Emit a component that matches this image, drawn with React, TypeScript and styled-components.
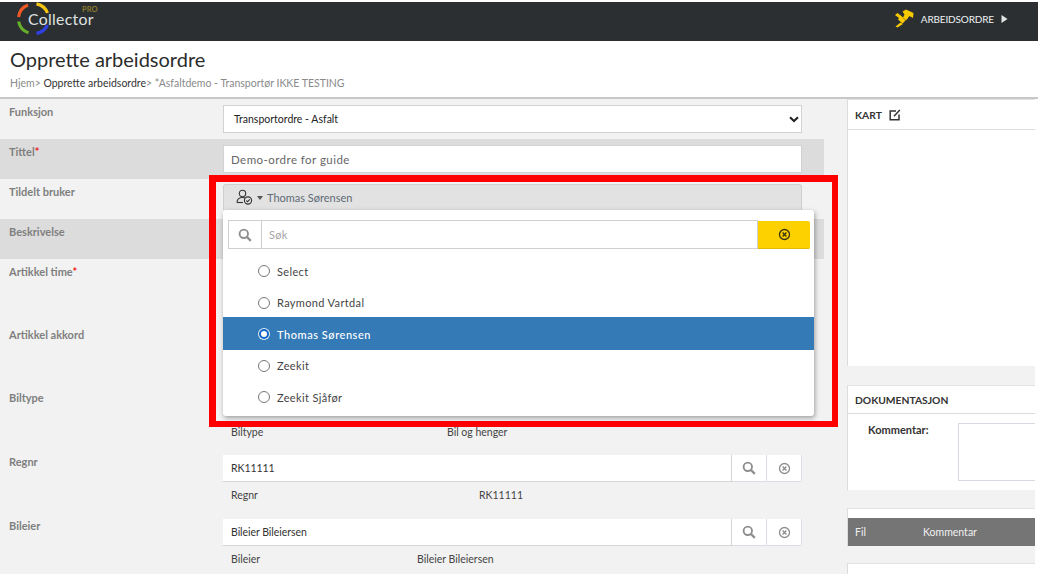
import React from 'react';
import styled, { createGlobalStyle } from 'styled-components';

const GlobalStyle = createGlobalStyle`
  html, body {
    margin: 0;
    padding: 0;
    background: #fff;
  }
  body {
    width: 1038px;
    height: 574px;
    overflow: hidden;
    font-family: Lato, "Open Sans", "Liberation Sans", sans-serif;
    font-size: 11px;
    color: #333;
  }
`;

const Page = styled.div`
  position: relative;
  width: 1038px;
  height: 574px;
  padding-top: 2px;
  box-sizing: border-box;
  overflow: hidden;
`;

const TopBar = styled.header`
  display: flex;
  align-items: flex-start;
  justify-content: space-between;
  height: 39px;
  padding: 0 30px 0 17px;
  background: #2b2f31;
`;

const Logo = styled.div`
  position: relative;
  display: flex;
  width: 80px;
  height: 33px;
`;

const LogoName = styled.span`
  position: absolute;
  left: 11px;
  top: 10px;
  font-size: 15.8px;
  line-height: 13px;
  letter-spacing: 0.3px;
  color: #dfe2e2;
`;

const LogoPro = styled.span`
  position: absolute;
  left: 65px;
  top: 5px;
  font-size: 7.5px;
  line-height: 5px;
  font-weight: 700;
  color: #8a7a2c;
`;

const NavLink = styled.div`
  display: flex;
  align-items: center;
  gap: 7px;
  height: 33px;
  font-size: 10px;
  letter-spacing: -0.15px;
  color: #eef2f5;
`;

const TitleArea = styled.div`
  height: 58px;
  padding: 6px 10px 0;
  box-sizing: border-box;
  border-bottom: 2px solid #c8c8c8;
`;

const PageTitle = styled.h1`
  margin: 0;
  font-size: 20px;
  line-height: 24px;
  font-weight: 400;
  color: #2c2c2c;
`;

const Crumbs = styled.div`
  margin-top: 5px;
  font-size: 10.5px;
  line-height: 14px;
  color: #8a8a8a;
`;

const CrumbActive = styled.span`
  color: #333;
`;

const Content = styled.div`
  display: flex;
  width: 1035px;
  height: 475px;
  background: #f2f2f2;
`;

const FormColumn = styled.main`
  width: 824px;
  margin-right: 23px;
  flex: none;
`;

const Row = styled.div<{ $height: number; $shaded?: boolean }>`
  display: grid;
  grid-template-columns: 223px 579px;
  height: ${(p) => p.$height}px;
  padding-top: 6px;
  box-sizing: border-box;
  background: ${(p) => (p.$shaded ? '#dcdcdc' : 'transparent')};
`;

const Label = styled.label`
  padding-left: 9px;
  font-size: 11px;
  line-height: 14px;
  font-weight: 700;
  color: #7f7f7f;
`;

const Required = styled.span`
  color: #f01818;
`;

const Field = styled.div`
  position: relative;
  min-width: 0;
`;

const TextBox = styled.div<{ $muted?: boolean }>`
  display: flex;
  align-items: center;
  justify-content: space-between;
  height: 28px;
  padding: 0 7px 0 7px;
  box-sizing: border-box;
  background: #fff;
  border: 1px solid #d2d2d2;
  font-size: ${(p) => (p.$muted ? '11.5px' : '10.5px')};
  letter-spacing: ${(p) => (p.$muted ? '0.45px' : '0')};
  color: ${(p) => (p.$muted ? '#666' : '#333')};
`;

const SelectBox = styled(TextBox)`
  padding-left: 10px;
  padding-right: 2px;
  color: #222;
`;

const LookupGroup = styled.div`
  display: flex;
  height: 27px;
`;

const LookupInput = styled.div`
  flex: 1;
  display: flex;
  align-items: center;
  padding-left: 8px;
  background: #fff;
  border-bottom: 1px solid #d4d4d4;
  border-right: 1px solid #d4d4d4;
  font-size: 10.5px;
  letter-spacing: -0.05px;
  color: #333;
`;

const LookupButton = styled.div`
  display: flex;
  align-items: center;
  justify-content: center;
  width: 34px;
  background: #fff;
  border-right: 1px solid #dcdce4;
  border-bottom: 1px solid #dcdce4;
  border-radius: 0 0 2px 0;
`;

const Hint = styled.div<{ $gap: number; $top?: number }>`
  display: grid;
  grid-template-columns: ${(p) => p.$gap}px 1fr;
  padding: ${(p) => p.$top ?? 6}px 0 0 8px;
  font-size: 10.5px;
  line-height: 14px;
  color: #444;
`;

const AssignButton = styled.div`
  display: flex;
  align-items: center;
  gap: 4px;
  height: 26px;
  margin-top: -1px;
  padding-left: 12px;
  box-sizing: border-box;
  background: #e2e2e2;
  border: 1px solid #cfcfcf;
  border-bottom: none;
  border-radius: 3px 3px 0 0;
  font-size: 11px;
  color: #5f6b76;
`;

const Caret = styled.span`
  width: 0;
  height: 0;
  margin-top: 1px;
  border-left: 3px solid transparent;
  border-right: 3px solid transparent;
  border-top: 4px solid #555;
`;

const Menu = styled.div`
  position: absolute;
  left: 0;
  top: 25px;
  z-index: 2;
  width: 591px;
  height: 206px;
  background: #fff;
  border-radius: 3px;
  box-shadow: 1px 2px 5px rgba(0, 0, 0, 0.35);
`;

const SearchBar = styled.div`
  display: flex;
  height: 29px;
  margin: 10px 4px 6px 5px;
`;

const SearchIcon = styled.div`
  display: flex;
  align-items: center;
  justify-content: center;
  width: 34px;
  box-sizing: border-box;
  border: 1px solid #cfcfcf;
`;

const SearchInput = styled.div`
  flex: 1;
  display: flex;
  align-items: center;
  padding-left: 7px;
  border: 1px solid #cfcfcf;
  border-left: none;
  font-size: 11px;
  letter-spacing: 0.3px;
  color: #a5a5a5;
`;

const ClearButton = styled.div`
  display: flex;
  align-items: center;
  justify-content: center;
  width: 52px;
  height: 27px;
  margin-top: 1px;
  background: #fdd000;
  border-bottom: 1px solid #e0b900;
  border-radius: 0 2px 2px 0;
`;

const Option = styled.div<{ $selected?: boolean }>`
  display: flex;
  align-items: center;
  gap: 7px;
  height: 31.5px;
  padding: 1px 0 0 35px;
  box-sizing: border-box;
  font-size: 11px;
  letter-spacing: ${(p) => (p.$selected ? '0.55px' : '0.35px')};
  background: ${(p) => (p.$selected ? '#337ab7' : 'transparent')};
  box-shadow: ${(p) => (p.$selected ? '0 -1px 0 #337ab7' : 'none')};
  color: ${(p) => (p.$selected ? '#fff' : '#444')};
  font-weight: ${(p) => (p.$selected ? 500 : 400)};
`;

const Radio = styled.span<{ $selected?: boolean }>`
  width: ${(p) => (p.$selected ? 10 : 12)}px;
  height: ${(p) => (p.$selected ? 10 : 12)}px;
  margin: ${(p) => (p.$selected ? '0 1px' : '0')};
  box-sizing: border-box;
  border-radius: 50%;
  background: ${(p) => (p.$selected ? '#fff' : 'transparent')};
  border: ${(p) => (p.$selected ? '2.5px solid #1565c8' : '1px solid #777')};
  box-shadow: ${(p) => (p.$selected ? '0 0 0 1px #dfeaf5' : 'none')};
`;

const Highlight = styled.div`
  position: absolute;
  left: 209px;
  top: 175px;
  z-index: 3;
  width: 629px;
  height: 252px;
  box-sizing: border-box;
  border-style: solid;
  border-color: #ff0000;
  border-width: 7px 6px 6px 7px;
  pointer-events: none;
`;

const SideColumn = styled.aside`
  display: flex;
  flex-direction: column;
  width: 188px;
  flex: none;
`;

const Panel = styled.section<{ $height: number; $gap: number }>`
  height: ${(p) => p.$height}px;
  margin-bottom: ${(p) => p.$gap}px;
  box-sizing: border-box;
  background: #fff;
  border-left: 1px solid #dcdcdc;
  border-top: 1px solid #e2e2e2;
`;

const PanelHead = styled.div<{ $height: number }>`
  display: flex;
  align-items: center;
  gap: 7px;
  height: ${(p) => p.$height}px;
  padding-left: 7px;
  box-sizing: border-box;
  border-bottom: 1px solid #dcdcdc;
  font-size: 10.3px;
  font-weight: 700;
  color: #333;
`;

const CommentRow = styled.div`
  display: flex;
  padding: 9px 0 0 20px;
`;

const CommentLabel = styled.span`
  width: 90px;
  font-size: 11px;
  line-height: 14px;
  font-weight: 700;
  color: #333;
`;

const CommentBox = styled.div`
  flex: 1;
  height: 58px;
  box-sizing: border-box;
  border: 1px solid #d6d8e2;
  border-right: none;
  background: #fff;
`;

const TableHead = styled.div`
  display: grid;
  grid-template-columns: 68px 1fr;
  align-items: center;
  height: 28px;
  margin-top: 9px;
  padding-left: 7px;
  background: #757575;
  font-size: 10.5px;
  color: #f0f0f0;
`;

const CollectorRing = () => (
  <svg width="36" height="34" viewBox="0 0 36 34" fill="none" strokeWidth="3.2" style={{ position: 'absolute', left: 0, top: 0 }}>
    <path d="M1.6 15 A15 15 0 0 1 11 3" stroke="#ef5a24" />
    <path d="M19.5 1.9 A15 15 0 0 1 30.5 11" stroke="#f3c613" />
    <path d="M1.6 19.5 A15 15 0 0 0 11.5 30.8" stroke="#66ad2c" />
    <path d="M19.5 31.4 A15 15 0 0 0 30.5 23" stroke="#2f3fe0" />
  </svg>
);

const HammerIcon = () => (
  <svg width="20" height="19" viewBox="0 0 20 19" fill="#f6c900">
    <path d="M8.5 2.5 L12 0.5 L19.5 4 L19 9 L15.5 7 L12 11.5 L9 8.5 L10.5 5.5 Z" />
    <path d="M1 6 L3.5 4 L8 7.5 L11.5 11.5 L8.5 14.5 L4 10.5 L5 9 Z" />
    <path d="M6.5 13.5 L9 15 L3.5 18.5 L1.5 17.5 Z" />
  </svg>
);

const PlayIcon = () => (
  <svg width="7" height="8" viewBox="0 0 7 8" fill="#e4e4e4">
    <path d="M0.5 0 L6.5 4 L0.5 8 Z" />
  </svg>
);

const EditIcon = () => (
  <svg width="12" height="12" viewBox="0 0 12 12" fill="none" stroke="#333" strokeWidth="1.5">
    <path d="M7 2 H1.2 V10.8 H10 V5.5" />
    <path d="M5 7.2 L10.8 1" />
  </svg>
);

const SearchGlyph = () => (
  <svg width="14" height="14" viewBox="0 0 14 14" fill="none" stroke="#8f8f8f">
    <circle cx="5.8" cy="5.8" r="4.2" strokeWidth="1.9" />
    <path d="M9 9 L12.8 12.8" strokeWidth="2.4" />
  </svg>
);

const ClearGlyph = ({ color = '#8f8f8f' }: { color?: string }) => (
  <svg width="13" height="13" viewBox="0 0 13 13" fill="none" stroke={color}>
    <circle cx="6.5" cy="6.5" r="5" strokeWidth="1.3" />
    <path d="M4.6 4.6 L8.4 8.4 M8.4 4.6 L4.6 8.4" strokeWidth="1.4" />
  </svg>
);

const UserCheckIcon = () => (
  <svg width="17" height="17" viewBox="0 0 17 17" fill="none" stroke="#333" strokeWidth="1.1">
    <circle cx="6.5" cy="4.5" r="3.2" />
    <path d="M1 13.5 C1 10 3.5 8.5 6.5 8.5 C7.5 8.5 8.2 8.7 9 9" />
    <path d="M1 13.5 H7" />
    <circle cx="12" cy="11.5" r="3.6" />
    <path d="M10.3 11.5 L11.6 12.8 L13.8 10.4" />
  </svg>
);

const ChevronIcon = () => (
  <svg width="10" height="7" viewBox="0 0 10 7" fill="none" stroke="#222" strokeWidth="2">
    <path d="M1 1.2 L5 5 L9 1.2" />
  </svg>
);

const users = ['Select', 'Raymond Vartdal', 'Thomas Sørensen', 'Zeekit', 'Zeekit Sjåfør'];

const lookups = [
  { label: 'Regnr', value: 'RK11111', gap: 248, height: 64 },
  { label: 'Bileier', value: 'Bileier Bileiersen', gap: 186, height: 61 },
];

const App = () => {
  return (
    <Page>
      <GlobalStyle />
      <TopBar>
        <Logo>
          <CollectorRing />
          <LogoName>Collector</LogoName>
          <LogoPro>PRO</LogoPro>
        </Logo>
        <NavLink>
          <HammerIcon />
          ARBEIDSORDRE
          <PlayIcon />
        </NavLink>
      </TopBar>
      <TitleArea>
        <PageTitle>Opprette arbeidsordre</PageTitle>
        <Crumbs>
          Hjem&gt; <CrumbActive>Opprette arbeidsordre</CrumbActive>&gt; *Asfaltdemo - Transportør IKKE TESTING
        </Crumbs>
      </TitleArea>
      <Content>
        <FormColumn>
          <Row $height={40}>
            <Label>Funksjon</Label>
            <SelectBox>
              Transportordre - Asfalt
              <ChevronIcon />
            </SelectBox>
          </Row>
          <Row $height={40} $shaded>
            <Label>
              Tittel<Required>*</Required>
            </Label>
            <TextBox $muted>Demo-ordre for guide</TextBox>
          </Row>
          <Row $height={40}>
            <Label>Tildelt bruker</Label>
            <Field>
              <AssignButton>
                <UserCheckIcon />
                <Caret />
                Thomas Sørensen
              </AssignButton>
              <Menu>
                <SearchBar>
                  <SearchIcon>
                    <SearchGlyph />
                  </SearchIcon>
                  <SearchInput>Søk</SearchInput>
                  <ClearButton>
                    <ClearGlyph color="#3a3410" />
                  </ClearButton>
                </SearchBar>
                {users.map((user) => (
                  <Option key={user} $selected={user === 'Thomas Sørensen'}>
                    <Radio $selected={user === 'Thomas Sørensen'} />
                    {user}
                  </Option>
                ))}
              </Menu>
            </Field>
          </Row>
          <Row $height={40} $shaded>
            <Label>Beskrivelse</Label>
          </Row>
          <Row $height={63}>
            <Label>
              Artikkel time<Required>*</Required>
            </Label>
          </Row>
          <Row $height={63}>
            <Label>Artikkel akkord</Label>
          </Row>
          <Row $height={64}>
            <Label>Biltype</Label>
            <Field>
              <LookupGroup />
              <Hint $gap={216} $top={7}>
                <span>Biltype</span>
                <span>Bil og henger</span>
              </Hint>
            </Field>
          </Row>
          {lookups.map((item) => (
            <Row key={item.label} $height={item.height}>
              <Label>{item.label}</Label>
              <Field>
                <LookupGroup>
                  <LookupInput>{item.value}</LookupInput>
                  <LookupButton>
                    <SearchGlyph />
                  </LookupButton>
                  <LookupButton>
                    <ClearGlyph />
                  </LookupButton>
                </LookupGroup>
                <Hint $gap={item.gap}>
                  <span>{item.label}</span>
                  <span>{item.value}</span>
                </Hint>
              </Field>
            </Row>
          ))}
        </FormColumn>
        <SideColumn>
          <Panel $height={267} $gap={19}>
            <PanelHead $height={30}>
              KART
              <EditIcon />
            </PanelHead>
          </Panel>
          <Panel $height={105} $gap={18}>
            <PanelHead $height={28}>DOKUMENTASJON</PanelHead>
            <CommentRow>
              <CommentLabel>Kommentar:</CommentLabel>
              <CommentBox />
            </CommentRow>
          </Panel>
          <Panel $height={38} $gap={17}>
            <TableHead>
              <span>Fil</span>
              <span>Kommentar</span>
            </TableHead>
          </Panel>
          <Panel $height={11} $gap={0} />
        </SideColumn>
      </Content>
      <Highlight />
    </Page>
  );
};

export default App;
